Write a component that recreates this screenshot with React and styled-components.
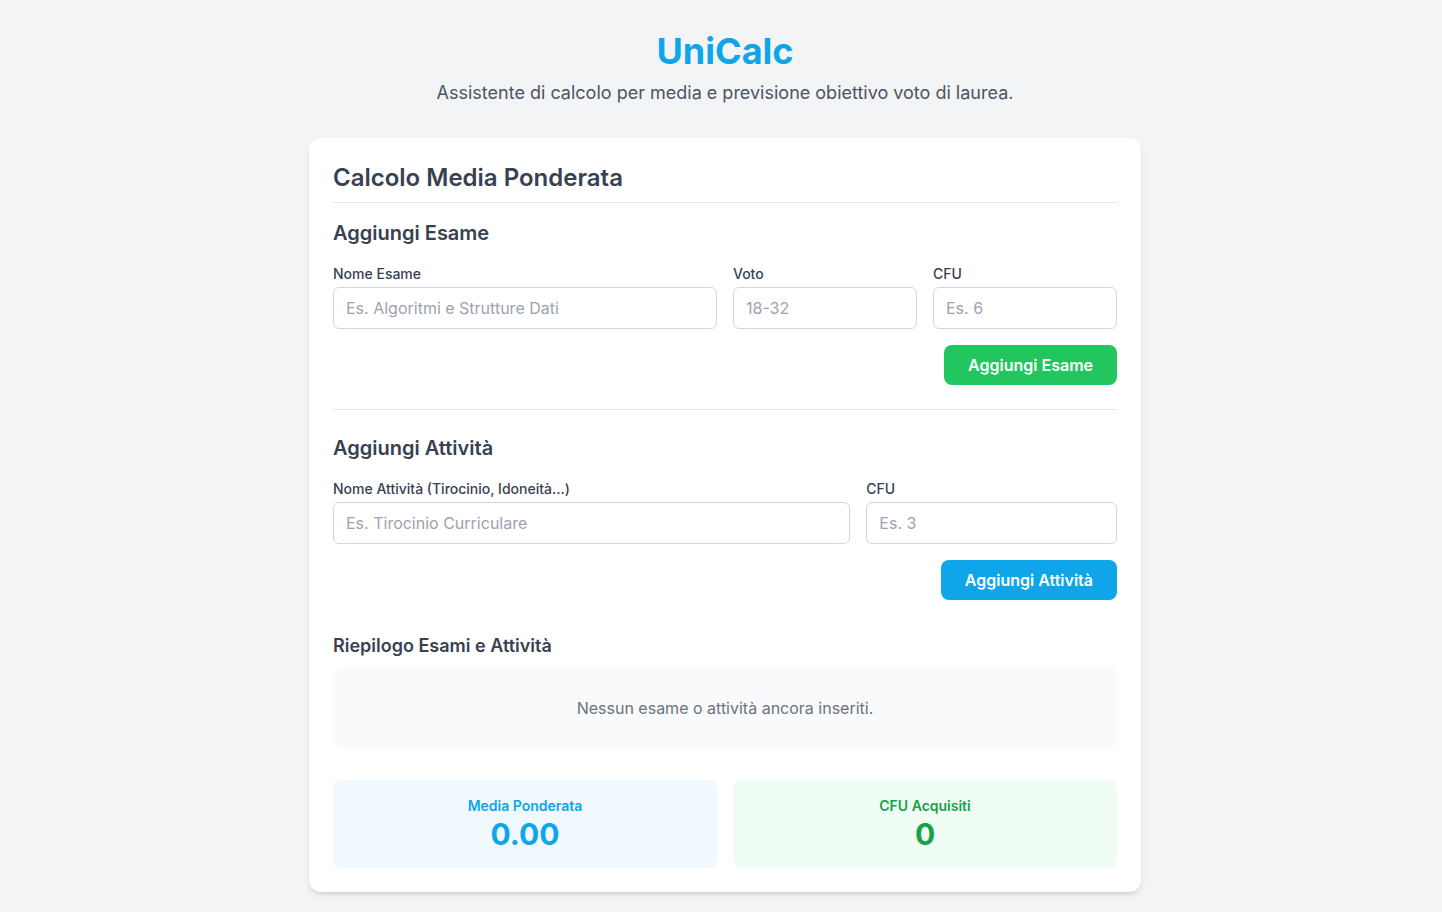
import React from "react";
import styled, { createGlobalStyle } from "styled-components";

const GlobalStyle = createGlobalStyle`
  * { box-sizing: border-box; }
  body {
    margin: 0;
    background: #f3f4f6;
    font-family: Inter, "Noto Sans", sans-serif;
    color: #1f2937;
  }
`;

const Page = styled.div`
  padding: 31px 12px 20px 20px;
`;

const Header = styled.header`
  text-align: center;
  margin-bottom: 31px;
`;

const Title = styled.h1`
  margin: 0 0 8px;
  font-size: 36px;
  line-height: 40px;
  font-weight: 700;
  color: #0ea5e9;
`;

const Subtitle = styled.p`
  margin: 0;
  font-size: 18px;
  line-height: 28px;
  color: #4b5563;
`;

const Card = styled.main`
  width: 832px;
  margin: 0 auto;
  background: #fff;
  border-radius: 12px;
  padding: 24px;
  box-shadow: 0 4px 6px -1px rgba(0, 0, 0, 0.1), 0 2px 4px -2px rgba(0, 0, 0, 0.1);
`;

const CardTitle = styled.h2`
  margin: 0 0 16px;
  padding-bottom: 8px;
  font-size: 24px;
  line-height: 32px;
  font-weight: 600;
  color: #374151;
  border-bottom: 1px solid #e5e7eb;
`;

const Section = styled.section`
  ${(p) =>
    p.$divided &&
    `
    margin-top: 24px;
    padding-top: 24px;
    border-top: 1px solid #e5e7eb;
  `}
`;

const SectionTitle = styled.h3`
  margin: 0 0 16px;
  font-size: 20px;
  line-height: 28px;
  font-weight: 600;
  color: #374151;
`;

const FormGrid = styled.div`
  display: grid;
  grid-template-columns: repeat(12, 1fr);
  gap: 16px;
`;

const Field = styled.div`
  grid-column: span ${(p) => p.$span};
  display: flex;
  flex-direction: column;
`;

const Label = styled.label`
  font-size: 14px;
  line-height: 20px;
  font-weight: 500;
  color: #374151;
  padding-top: 1px;
  margin-bottom: 3px;
`;

const Input = styled.input`
  height: 42px;
  padding: 8px 12px;
  font-family: inherit;
  font-size: 16px;
  border: 1px solid #d1d5db;
  border-radius: 6px;
  color: #1f2937;
  outline: none;
  &::placeholder {
    color: #9ca3af;
  }
`;

const Actions = styled.div`
  display: flex;
  justify-content: flex-end;
  margin-top: 16px;
`;

const Button = styled.button`
  height: 40px;
  padding: 0 24px;
  border: none;
  border-radius: 8px;
  font-family: inherit;
  font-size: 16px;
  font-weight: 600;
  color: #fff;
  background: ${(p) => (p.$variant === "green" ? "#22c55e" : "#0ea5e9")};
  cursor: pointer;
`;

const SummaryTitle = styled.h4`
  margin: 32px 0 8px;
  font-size: 18px;
  line-height: 28px;
  font-weight: 600;
  color: #374151;
`;

const EmptyList = styled.div`
  background: #f9fafb;
  border-radius: 8px;
  height: 80px;
  display: flex;
  align-items: center;
  justify-content: center;
  font-size: 16px;
  color: #6b7280;
`;

const Stats = styled.div`
  display: grid;
  grid-template-columns: 1fr 1fr;
  gap: 16px;
  margin-top: 32px;
`;

const StatBox = styled.div`
  background: ${(p) => (p.$tone === "green" ? "#f0fdf4" : "#f0f9ff")};
  color: ${(p) => (p.$tone === "green" ? "#16a34a" : "#0ea5e9")};
  border-radius: 8px;
  padding: 16px;
  text-align: center;
`;

const StatLabel = styled.div`
  font-size: 14px;
  line-height: 20px;
  font-weight: 600;
`;

const StatValue = styled.div`
  font-size: 30px;
  line-height: 36px;
  font-weight: 700;
`;

export default function App() {
  return (
    <Page>
      <GlobalStyle />
      <Header>
        <Title>UniCalc</Title>
        <Subtitle>Assistente di calcolo per media e previsione obiettivo voto di laurea.</Subtitle>
      </Header>

      <Card>
        <CardTitle>Calcolo Media Ponderata</CardTitle>

        <Section>
          <SectionTitle>Aggiungi Esame</SectionTitle>
          <FormGrid>
            <Field $span={6}>
              <Label>Nome Esame</Label>
              <Input placeholder="Es. Algoritmi e Strutture Dati" />
            </Field>
            <Field $span={3}>
              <Label>Voto</Label>
              <Input placeholder="18-32" />
            </Field>
            <Field $span={3}>
              <Label>CFU</Label>
              <Input placeholder="Es. 6" />
            </Field>
          </FormGrid>
          <Actions>
            <Button $variant="green">Aggiungi Esame</Button>
          </Actions>
        </Section>

        <Section $divided>
          <SectionTitle>Aggiungi Attività</SectionTitle>
          <FormGrid>
            <Field $span={8}>
              <Label>Nome Attività (Tirocinio, Idoneità...)</Label>
              <Input placeholder="Es. Tirocinio Curriculare" />
            </Field>
            <Field $span={4}>
              <Label>CFU</Label>
              <Input placeholder="Es. 3" />
            </Field>
          </FormGrid>
          <Actions>
            <Button>Aggiungi Attività</Button>
          </Actions>
        </Section>

        <SummaryTitle>Riepilogo Esami e Attività</SummaryTitle>
        <EmptyList>Nessun esame o attività ancora inseriti.</EmptyList>

        <Stats>
          <StatBox>
            <StatLabel>Media Ponderata</StatLabel>
            <StatValue>0.00</StatValue>
          </StatBox>
          <StatBox $tone="green">
            <StatLabel>CFU Acquisiti</StatLabel>
            <StatValue>0</StatValue>
          </StatBox>
        </Stats>
      </Card>
    </Page>
  );
}
